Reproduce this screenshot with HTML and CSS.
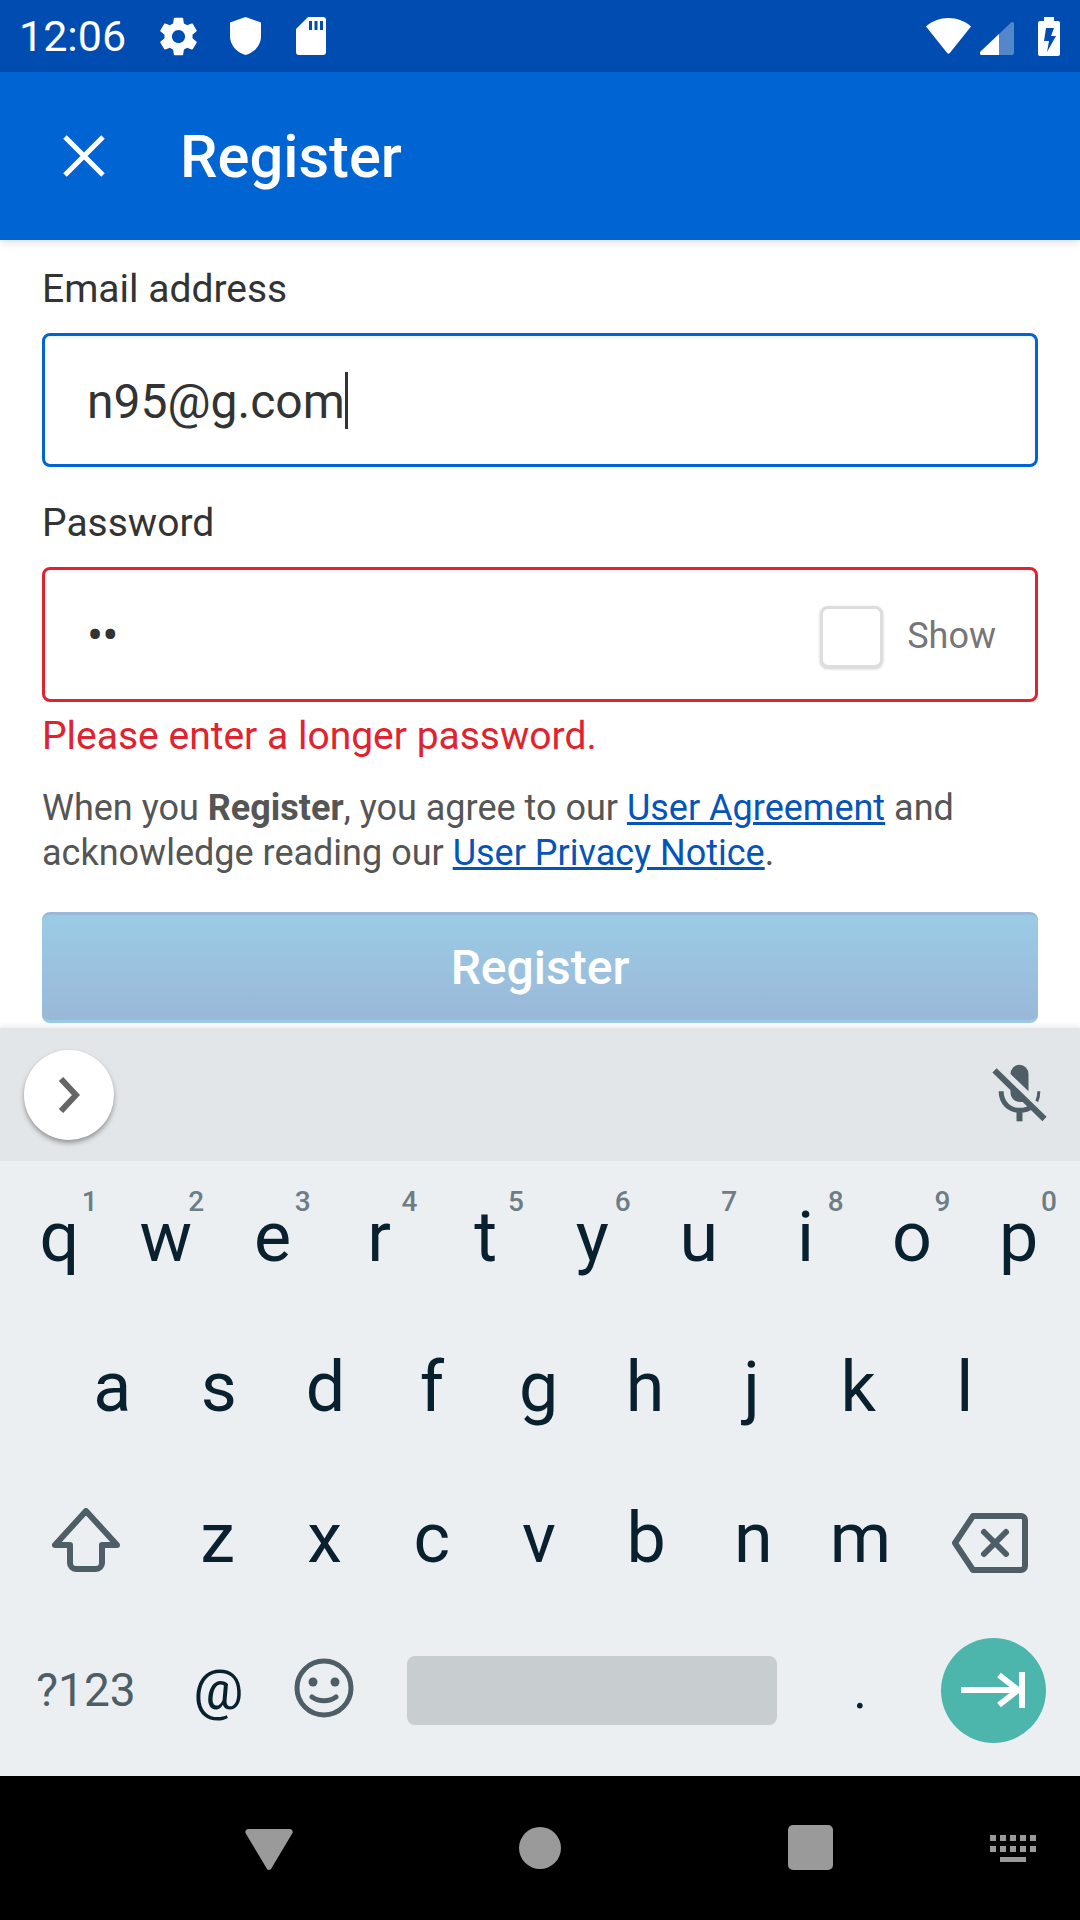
FILE: index.html
```html
<!DOCTYPE html>
<html lang="en">
<head>
    <meta charset="UTF-8">
    <meta name="viewport" content="width=device-width, initial-scale=1.0">
    <link rel="stylesheet" href="styles.css">
    <title>Register</title>
</head>
<body>
<div class="screen">

    <div class="status-bar">
        <span class="time">12:06</span>
        <svg class="st-gear" viewBox="0 0 24 24"><path d="M19.43 12.98c.04-.32.07-.64.07-.98s-.03-.66-.07-.98l2.11-1.65c.19-.15.24-.42.12-.64l-2-3.46c-.12-.22-.39-.3-.61-.22l-2.49 1c-.52-.4-1.08-.73-1.69-.98l-.38-2.65C14.46 2.18 14.25 2 14 2h-4c-.25 0-.46.18-.49.42l-.38 2.65c-.61.25-1.17.59-1.69.98l-2.49-1c-.23-.09-.49 0-.61.22l-2 3.46c-.13.22-.07.49.12.64l2.11 1.65c-.04.32-.07.65-.07.98s.03.66.07.98l-2.11 1.65c-.19.15-.24.42-.12.64l2 3.46c.12.22.39.3.61.22l2.49-1c.52.4 1.08.73 1.69.98l.38 2.65c.03.24.24.42.49.42h4c.25 0 .46-.18.49-.42l.38-2.65c.61-.25 1.17-.59 1.69-.98l2.49 1c.23.09.49 0 .61-.22l2-3.46c.12-.22.07-.49-.12-.64l-2.11-1.65zM12 15.5c-1.93 0-3.5-1.57-3.5-3.5s1.57-3.5 3.5-3.5 3.5 1.57 3.5 3.5-1.57 3.5-3.5 3.5z"/></svg>
        <svg class="st-shield" viewBox="0 0 31 38"><path d="M15.5 0 31 5.5V19c0 9-6.500 16.500-15.500 19C6.500 35.500 0 28 0 19V5.500z"/></svg>
        <svg class="st-sd" viewBox="0 0 30 38"><path fill-rule="evenodd" d="M12 0h15a3 3 0 0 1 3 3v32a3 3 0 0 1-3 3H3a3 3 0 0 1-3-3V12zM13 4v9h3V4zM18.500 4v9h3V4zM24 4v9h3V4z"/></svg>
        <span class="spacer"></span>
        <svg class="st-wifi" viewBox="0 0 45 36"><path d="M22.500 0C31 0 39 3 45 8.500L23.800 35a1.700 1.700 0 0 1-2.600 0L0 8.500C6 3 14 0 22.500 0z"/></svg>
        <svg class="st-signal" viewBox="0 0 34 34"><path d="M0 31 19 13v21H2a2 2 0 0 1-2-3z"/><path class="dim" d="M19 13 31 1.500c1-1 3-.5 3 1V32a2 2 0 0 1-2 2H19z"/></svg>
        <svg class="st-batt" viewBox="0 0 22 39"><path fill-rule="evenodd" d="M6 0h10v4h4a2 2 0 0 1 2 2v31a2 2 0 0 1-2 2H2a2 2 0 0 1-2-2V6a2 2 0 0 1 2-2h4zM8 11 6 24h5l-2 11 9-16h-5l3-8z"/></svg>
    </div>

    <header class="app-bar">
        <svg class="close-icon" viewBox="0 0 42 42"><path d="M2 2l38 38M40 2 2 40"/></svg>
        <h1>Register</h1>
    </header>

    <form class="form">
        <label class="field-label">Email address</label>
        <div class="input input-focus">
            <span class="input-text">n95@g.com</span><span class="caret"></span>
        </div>

        <label class="field-label label-second">Password</label>
        <div class="input input-error">
            <span class="dots">••</span>
            <span class="spacer"></span>
            <span class="checkbox"></span>
            <span class="show">Show</span>
        </div>
        <p class="error">Please enter a longer password.</p>

        <p class="terms">When you <b>Register</b>, you agree to our <a href="#">User Agreement</a> and acknowledge reading our <a href="#">User Privacy Notice</a>.</p>

        <button type="button" class="submit">Register</button>
    </form>

    <div class="keyboard">
        <div class="suggest">
            <div class="chevron-btn">
                <svg viewBox="0 0 22 36"><path d="M3 2l15 16L3 34"/></svg>
            </div>
            <svg class="mic-off" viewBox="95 70 170 180">
                <path class="fill" d="M153 103a27 28 0 0 1 54 0v52z"/>
                <path class="fill" d="M153 150l41 36q-24 4-34-8-7-8-7-18z"/>
                <path class="line arc" d="M125 155c0 35 25 57 55 57 15 0 28-4 38-12"/>
                <path class="line tip" d="M238 155c0 10-2 20-6 30"/>
                <path class="line stem" d="M180 212v33"/>
                <path class="line stem" d="M105 92l150 146"/>
            </svg>
        </div>

        <div class="key-row row-top">
            <div class="key">q<span class="hint">1</span></div>
            <div class="key">w<span class="hint">2</span></div>
            <div class="key">e<span class="hint">3</span></div>
            <div class="key">r<span class="hint">4</span></div>
            <div class="key">t<span class="hint">5</span></div>
            <div class="key">y<span class="hint">6</span></div>
            <div class="key">u<span class="hint">7</span></div>
            <div class="key">i<span class="hint">8</span></div>
            <div class="key">o<span class="hint">9</span></div>
            <div class="key">p<span class="hint">0</span></div>
        </div>
        <div class="key-row row-inset">
            <div class="key">a</div>
            <div class="key">s</div>
            <div class="key">d</div>
            <div class="key">f</div>
            <div class="key">g</div>
            <div class="key">h</div>
            <div class="key">j</div>
            <div class="key">k</div>
            <div class="key">l</div>
        </div>
        <div class="key-row row-tall">
            <div class="key key-shift">
                <svg class="shift" viewBox="0 0 68 64"><path d="M34 3 3 37h15v18a6 6 0 0 0 6 6h20a6 6 0 0 0 6-6V37h15z"/></svg>
            </div>
            <div class="key">z</div>
            <div class="key">x</div>
            <div class="key">c</div>
            <div class="key">v</div>
            <div class="key">b</div>
            <div class="key">n</div>
            <div class="key">m</div>
            <div class="key key-del">
                <svg class="backspace" viewBox="0 0 76 60"><path d="M21 3h48a4 4 0 0 1 4 4v46a4 4 0 0 1-4 4H21L3 30z"/><path d="M32 19l22 22M54 19 32 41"/></svg>
            </div>
        </div>
        <div class="key-row row-tall">
            <div class="key key-wide key-sym">?123</div>
            <div class="key key-fixed key-at">@</div>
            <div class="key key-fixed">
                <svg class="smiley" viewBox="0 0 60 60"><circle cx="30" cy="30" r="27"/><circle class="eye" cx="19" cy="24" r="4.500"/><circle class="eye" cx="41" cy="24" r="4.500"/><path d="M18 39c7 5 17 5 24 0"/></svg>
            </div>
            <div class="key key-space"><span class="space-bar"></span></div>
            <div class="key key-dot">.</div>
            <div class="key key-wide">
                <span class="action">
                    <svg viewBox="0 0 64 36"><path d="M0 18h57M38 3l19 15-19 15M61 0v36"/></svg>
                </span>
            </div>
        </div>
    </div>

    <nav class="nav-bar">
        <svg class="nav-back" viewBox="0 0 48 42"><path d="M3 0h42a3 3 0 0 1 2.500 4L26 40a2.500 2.500 0 0 1-4 0L.500 4A3 3 0 0 1 3 0z"/></svg>
        <span class="nav-home"></span>
        <span class="nav-recent"></span>
        <svg class="nav-kbd" viewBox="0 0 46 28">
            <path d="M0 0h6v6H0zM10 0h6v6h-6zM20 0h6v6h-6zM30 0h6v6h-6zM40 0h6v6h-6zM0 11h6v6H0zM10 11h6v6h-6zM20 11h6v6h-6zM30 11h6v6h-6zM40 11h6v6h-6zM10 22h26v5H10z"/>
        </svg>
    </nav>

</div>
</body>
</html>
```

FILE: styles.css
```css
* {
    box-sizing: border-box;
}
body {
    margin: 0;
    font-family: 'Roboto', sans-serif;
    background-color: #fff;
}
.screen {
    width: 1080px;
    height: 1920px;
    display: flex;
    flex-direction: column;
    overflow: hidden;
}
.spacer {
    flex: 1;
}

/* status bar */
.status-bar {
    height: 72px;
    background-color: #004cb0;
    display: flex;
    align-items: center;
    padding: 0 20px 0 19px;
    color: #fff;
}
.status-bar svg {
    fill: #fff;
    flex: none;
}
.time {
    font-size: 43px;
    width: 137px;
}
.st-gear {
    width: 45px;
    height: 45px;
}
.st-shield {
    width: 31px;
    height: 38px;
    margin-left: 29px;
}
.st-sd {
    width: 30px;
    height: 38px;
    margin-left: 35px;
}
.st-wifi {
    width: 45px;
    height: 36px;
}
.st-signal {
    width: 34px;
    height: 34px;
    margin-left: 9px;
    margin-top: 3px;
}
.status-bar .dim {
    opacity: 0.33;
}
.st-batt {
    width: 22px;
    height: 39px;
    margin-left: 24px;
}

/* app bar */
.app-bar {
    height: 168px;
    background-color: #0064d2;
    display: flex;
    align-items: center;
    padding-left: 63px;
    box-shadow: 0 2px 8px rgba(0, 0, 0, 0.15);
    position: relative;
}
.close-icon {
    width: 42px;
    height: 42px;
    fill: none;
    stroke: #fff;
    stroke-width: 5;
}
.app-bar h1 {
    margin: 2px 0 0 75px;
    font-size: 59.6px;
    font-weight: 500;
    color: #fff;
}

/* form */
.form {
    height: 788px;
    padding: 25px 42px 0;
}
.field-label {
    display: block;
    font-size: 39px;
    line-height: 48px;
    color: #333;
    margin-bottom: 20px;
}
.label-second {
    margin-top: 32px;
}
.input {
    height: 134px;
    border: 3px solid #0064d2;
    border-radius: 8px;
    display: flex;
    align-items: center;
    padding: 0 39px 0 42px;
    background-color: #fff;
    box-shadow: inset 0 2px 3px rgba(0, 0, 0, 0.05);
}
.input-text {
    font-size: 48px;
    color: #333;
    margin-top: 2px;
}
.caret {
    width: 3px;
    height: 57px;
    background-color: #333;
}
.input-error {
    height: 135px;
    border-color: #e0232e;
}
.dots {
    font-size: 48px;
    color: #333;
    letter-spacing: -1px;
    margin-top: 2px;
}
.checkbox {
    width: 63px;
    height: 62px;
    margin-top: 4px;
    background-color: #fff;
    border: 3px solid #ddd;
    border-radius: 8px;
    box-shadow: 0 1px 3px rgba(0, 0, 0, 0.2);
}
.show {
    font-size: 36px;
    color: #767676;
    margin-left: 24px;
    margin-top: 2px;
}
.error {
    margin: 11px 0 0;
    font-size: 39px;
    line-height: 46px;
    color: #e0232e;
}
.terms {
    margin: 27px 0 0;
    font-size: 36px;
    line-height: 45px;
    color: #555;
}
.terms a {
    color: #0654ba;
}
.submit {
    display: block;
    width: 100%;
    height: 111px;
    margin-top: 36px;
    padding: 0;
    border: none;
    border-top: 3px solid #9ab8d9;
    border-bottom: 3px solid #9bcbe4;
    border-radius: 8px;
    background: linear-gradient(#9bcbe4, #9ab8d9);
    color: #fff;
    font-family: inherit;
    font-size: 48px;
    font-weight: 500;
}

/* keyboard */
.keyboard {
    height: 748px;
    background-color: #eceff2;
    display: flex;
    flex-direction: column;
    box-shadow: 0 -3px 5px rgba(0, 0, 0, 0.06);
    position: relative;
}
.suggest {
    height: 133px;
    margin-bottom: 1px;
    background-color: #e2e6e9;
    display: flex;
    align-items: center;
    justify-content: space-between;
    padding: 0 32px 0 24px;
}
.chevron-btn {
    width: 90px;
    height: 90px;
    border-radius: 50%;
    background-color: #fff;
    box-shadow: 0 3px 5px rgba(0, 0, 0, 0.35);
    display: flex;
    align-items: center;
    justify-content: center;
}
.chevron-btn svg {
    width: 22px;
    height: 36px;
    fill: none;
    stroke: #666;
    stroke-width: 6;
}
.mic-off {
    width: 57px;
    height: 60px;
    margin-top: -3px;
}
.mic-off .fill {
    fill: #4d5e67;
}
.mic-off .line {
    fill: none;
    stroke: #4d5e67;
}
.mic-off .arc {
    stroke-width: 15;
}
.mic-off .tip {
    stroke-width: 9;
}
.mic-off .stem {
    stroke-width: 18;
}
.key-row {
    height: 150px;
    display: flex;
    padding: 0 7px;
}
.row-top {
    padding: 0 8px 0 6px;
}
.row-inset {
    padding: 0 62px 0 59px;
}
.row-tall {
    height: 152px;
}
.key {
    flex: 1;
    position: relative;
    display: flex;
    align-items: center;
    justify-content: center;
    font-size: 70px;
    color: #09202e;
}
.hint {
    position: absolute;
    top: 23px;
    right: 15px;
    font-size: 28px;
    font-weight: 500;
    color: #6e7d85;
}
.key-wide {
    flex: none;
    width: 158px;
}
.key-shift {
    flex: none;
    width: 157px;
}
.key-del {
    flex: none;
    width: 159px;
}
.key-fixed {
    flex: none;
    width: 107px;
}
.key-sym {
    font-size: 46px;
    color: #4d5e67;
}
.key-at {
    font-size: 56px;
}
.key-space {
    flex: none;
    width: 426px;
}
.space-bar {
    width: 370px;
    height: 69px;
    background-color: #c8cdd0;
    border-radius: 8px;
}
.key-dot {
    font-size: 52px;
}
.shift {
    width: 68px;
    height: 64px;
    margin-top: 4px;
    fill: none;
    stroke: #4d5e67;
    stroke-width: 6;
    stroke-linejoin: round;
}
.backspace {
    width: 76px;
    height: 60px;
    margin: 10px 6px 0 0;
    fill: none;
    stroke: #4d5e67;
    stroke-width: 6;
    stroke-linejoin: round;
    stroke-linecap: round;
}
.smiley {
    width: 60px;
    height: 60px;
    margin: -4px 4px 0 0;
    fill: none;
    stroke: #4d5e67;
    stroke-width: 5;
    stroke-linecap: round;
}
.smiley .eye {
    fill: #4d5e67;
    stroke: none;
}
.action {
    width: 105px;
    height: 105px;
    margin-right: 2px;
    border-radius: 50%;
    background-color: #4db6ac;
    display: flex;
    align-items: center;
    justify-content: center;
}
.action svg {
    width: 64px;
    height: 36px;
    fill: none;
    stroke: #fff;
    stroke-width: 6;
}

/* nav bar */
.nav-bar {
    height: 144px;
    background-color: #000;
    position: relative;
}
.nav-bar svg {
    fill: #9a9a9a;
}
.nav-back {
    position: absolute;
    left: 245px;
    top: 53px;
    width: 48px;
    height: 42px;
}
.nav-home {
    position: absolute;
    left: 519px;
    top: 51px;
    width: 42px;
    height: 42px;
    border-radius: 50%;
    background-color: #9a9a9a;
}
.nav-recent {
    position: absolute;
    left: 788px;
    top: 49px;
    width: 45px;
    height: 45px;
    border-radius: 5px;
    background-color: #9a9a9a;
}
.nav-kbd {
    position: absolute;
    left: 990px;
    top: 59px;
    width: 46px;
    height: 28px;
}
```
